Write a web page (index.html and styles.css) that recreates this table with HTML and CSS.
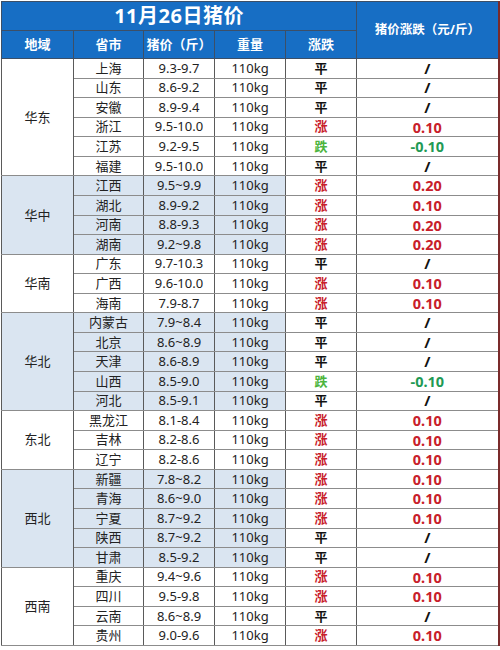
FILE: index.html
```html
<!DOCTYPE html>
<html lang="zh-CN">
<head>
    <meta charset="UTF-8">
    <meta name="viewport" content="width=device-width, initial-scale=1.0">
    <title>11月26日猪价</title>
    <link rel="stylesheet" href="styles.css">
</head>
<body>
    <table class="price-table">
        <colgroup>
            <col class="c-region">
            <col class="c-prov">
            <col class="c-price">
            <col class="c-weight">
            <col class="c-trend">
            <col class="c-diff">
        </colgroup>
        <thead>
            <tr class="title-row">
                <th colspan="5" class="title">11月26日猪价</th>
                <th rowspan="2" class="diff-head">猪价涨跌（元/斤）</th>
            </tr>
            <tr class="head-row">
                <th>地域</th>
                <th>省市</th>
                <th>猪价（斤）</th>
                <th>重量</th>
                <th>涨跌</th>
            </tr>
        </thead>
        <tbody class="group">
            <tr><td rowspan="6" class="region">华东</td><td>上海</td><td>9.3-9.7</td><td>110kg</td><td class="flat">平</td><td class="slash">/</td></tr>
            <tr><td>山东</td><td>8.6-9.2</td><td>110kg</td><td class="flat">平</td><td class="slash">/</td></tr>
            <tr><td>安徽</td><td>8.9-9.4</td><td>110kg</td><td class="flat">平</td><td class="slash">/</td></tr>
            <tr><td>浙江</td><td>9.5-10.0</td><td>110kg</td><td class="up">涨</td><td class="num up">0.10</td></tr>
            <tr><td>江苏</td><td>9.2-9.5</td><td>110kg</td><td class="down">跌</td><td class="num minus">-0.10</td></tr>
            <tr><td>福建</td><td>9.5-10.0</td><td>110kg</td><td class="flat">平</td><td class="slash">/</td></tr>
        </tbody>
        <tbody class="group shaded">
            <tr><td rowspan="4" class="region">华中</td><td>江西</td><td>9.5~9.9</td><td>110kg</td><td class="up">涨</td><td class="num up">0.20</td></tr>
            <tr><td>湖北</td><td>8.9-9.2</td><td>110kg</td><td class="up">涨</td><td class="num up">0.10</td></tr>
            <tr><td>河南</td><td>8.8-9.3</td><td>110kg</td><td class="up">涨</td><td class="num up">0.20</td></tr>
            <tr><td>湖南</td><td>9.2~9.8</td><td>110kg</td><td class="up">涨</td><td class="num up">0.20</td></tr>
        </tbody>
        <tbody class="group">
            <tr><td rowspan="3" class="region">华南</td><td>广东</td><td>9.7-10.3</td><td>110kg</td><td class="flat">平</td><td class="slash">/</td></tr>
            <tr><td>广西</td><td>9.6-10.0</td><td>110kg</td><td class="up">涨</td><td class="num up">0.10</td></tr>
            <tr><td>海南</td><td>7.9-8.7</td><td>110kg</td><td class="up">涨</td><td class="num up">0.10</td></tr>
        </tbody>
        <tbody class="group shaded">
            <tr><td rowspan="5" class="region">华北</td><td>内蒙古</td><td>7.9~8.4</td><td>110kg</td><td class="flat">平</td><td class="slash">/</td></tr>
            <tr><td>北京</td><td>8.6~8.9</td><td>110kg</td><td class="flat">平</td><td class="slash">/</td></tr>
            <tr><td>天津</td><td>8.6-8.9</td><td>110kg</td><td class="flat">平</td><td class="slash">/</td></tr>
            <tr><td>山西</td><td>8.5-9.0</td><td>110kg</td><td class="down">跌</td><td class="num minus">-0.10</td></tr>
            <tr><td>河北</td><td>8.5-9.1</td><td>110kg</td><td class="flat">平</td><td class="slash">/</td></tr>
        </tbody>
        <tbody class="group">
            <tr><td rowspan="3" class="region">东北</td><td>黑龙江</td><td>8.1-8.4</td><td>110kg</td><td class="up">涨</td><td class="num up">0.10</td></tr>
            <tr><td>吉林</td><td>8.2-8.6</td><td>110kg</td><td class="up">涨</td><td class="num up">0.10</td></tr>
            <tr><td>辽宁</td><td>8.2-8.6</td><td>110kg</td><td class="up">涨</td><td class="num up">0.10</td></tr>
        </tbody>
        <tbody class="group shaded">
            <tr><td rowspan="5" class="region">西北</td><td>新疆</td><td>7.8~8.2</td><td>110kg</td><td class="up">涨</td><td class="num up">0.10</td></tr>
            <tr><td>青海</td><td>8.6~9.0</td><td>110kg</td><td class="up">涨</td><td class="num up">0.10</td></tr>
            <tr><td>宁夏</td><td>8.7~9.2</td><td>110kg</td><td class="up">涨</td><td class="num up">0.10</td></tr>
            <tr><td>陕西</td><td>8.7~9.2</td><td>110kg</td><td class="flat">平</td><td class="slash">/</td></tr>
            <tr><td>甘肃</td><td>8.5-9.2</td><td>110kg</td><td class="flat">平</td><td class="slash">/</td></tr>
        </tbody>
        <tbody class="group">
            <tr><td rowspan="4" class="region">西南</td><td>重庆</td><td>9.4~9.6</td><td>110kg</td><td class="up">涨</td><td class="num up">0.10</td></tr>
            <tr><td>四川</td><td>9.5-9.8</td><td>110kg</td><td class="up">涨</td><td class="num up">0.10</td></tr>
            <tr><td>云南</td><td>8.6~8.9</td><td>110kg</td><td class="flat">平</td><td class="slash">/</td></tr>
            <tr><td>贵州</td><td>9.0-9.6</td><td>110kg</td><td class="up">涨</td><td class="num up">0.10</td></tr>
        </tbody>
    </table>
</body>
</html>
```

FILE: styles.css
```css
body {
    margin: 0;
    padding: 1px 0 0 1px;
    background: #ffffff;
    font-family: "Noto Sans", "Noto Sans CJK SC", sans-serif;
    color: #222222;
}
.price-table {
    width: 497px;
    table-layout: fixed;
    border-collapse: collapse;
    border: 1px solid #6a6a6a;
    border-right: 2px solid #7a2a2a;
    font-size: 13px;
}
.c-region { width: 72px; }
.c-prov { width: 70px; }
.c-price { width: 71px; }
.c-weight { width: 71px; }
.c-trend { width: 71px; }
.c-diff { width: 142px; }
.price-table th,
.price-table td {
    padding: 0;
    text-align: center;
    vertical-align: middle;
    line-height: 1;
    border-left: 1px solid #5a5a5a;
    border-right: 1px solid #5a5a5a;
    border-top: 1px solid #8c8c8c;
    border-bottom: 1px solid #8c8c8c;
}
.price-table th {
    background: #176ec4;
    color: #ffffff;
    font-weight: bold;
    border-color: #3d4f66;
}
.title-row {
    height: 29px;
}
.title {
    font-size: 20px;
    letter-spacing: 0.5px;
}
.head-row {
    height: 28px;
}
.head-row th {
    font-size: 13px;
}
.diff-head {
    font-size: 12.5px;
}
.group {
    border-top: 1px solid #555555;
}
.group tr {
    height: 19.57px;
}
.shaded td {
    background: #dae5f1;
}
.shaded td:nth-last-child(-n+2) {
    background: #ffffff;
}
.region {
    font-size: 13px;
}
.flat {
    font-weight: bold;
    color: #111111;
}
.up {
    font-weight: bold;
    color: #c8202a;
}
.down {
    font-weight: bold;
    color: #4cb43c;
}
.minus {
    font-weight: bold;
    color: #1f9a55;
}
.num {
    font-size: 14.5px;
}
.slash {
    font-weight: bold;
    font-size: 15px;
    color: #111111;
}
```
